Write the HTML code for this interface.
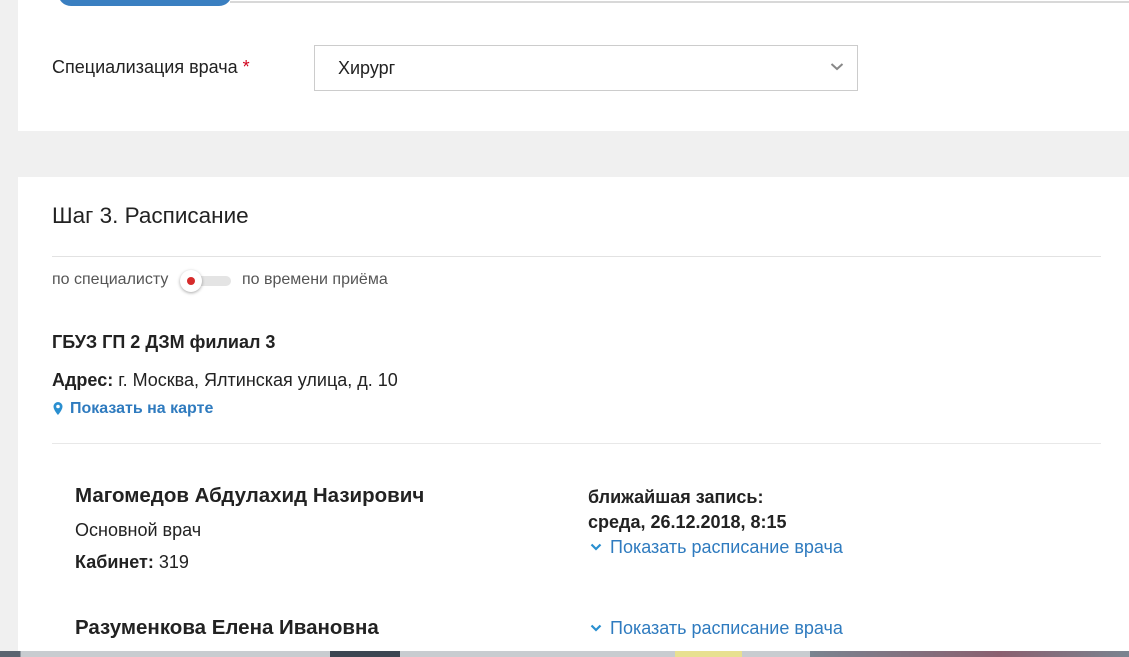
<!DOCTYPE html>
<html><head><meta charset="utf-8"><style>
*{margin:0;padding:0;box-sizing:border-box}
body{width:1129px;height:657px;overflow:hidden;background:#f0f0f0;font-family:"Liberation Sans",Arial,sans-serif;color:#222;position:relative}
.a{position:absolute;white-space:nowrap}
.w{background:#fff;left:18px;width:1111px}
</style></head><body>
<div class="a w" style="top:0;height:131px"></div>
<div class="a" style="left:230px;top:1px;width:899px;height:2px;background:#d8d8d8"></div>
<div class="a" style="left:58px;top:-20px;width:174px;height:26px;border-radius:13px;background:#3a7fc1"></div>
<div class="a" style="left:52px;top:57px;font-size:18px">Специализация врача <span style="color:#d0021b">*</span></div>
<div class="a" style="left:314px;top:45px;width:544px;height:46px;border:1px solid #ccc;background:#fff"></div>
<div class="a" style="left:338px;top:58px;font-size:18px">Хирург</div>
<svg class="a" style="left:830px;top:62px" width="14" height="10"><path d="M1.5 2l5.5 5 5.5-5" fill="none" stroke="#888" stroke-width="2"/></svg>

<div class="a w" style="top:177px;height:474px"></div>
<div class="a" style="left:52px;top:203px;font-size:22.5px;color:#222">Шаг 3. Расписание</div>
<div class="a" style="left:52px;top:256px;width:1049px;height:1px;background:#e2e2e2"></div>
<div class="a" style="left:52px;top:271px;font-size:16px;color:#555">по специалисту</div>
<div class="a" style="left:184px;top:276px;width:47px;height:10px;border-radius:5px;background:#e4e4e4"></div>
<div class="a" style="left:180px;top:270px;width:22px;height:22px;border-radius:50%;background:#fff;box-shadow:0 1px 3px rgba(0,0,0,.35)"></div>
<div class="a" style="left:187px;top:277px;width:8px;height:8px;border-radius:50%;background:#d62b2b"></div>
<div class="a" style="left:242px;top:271px;font-size:16px;color:#555">по времени приёма</div>
<div class="a" style="left:52px;top:332px;font-size:18px;font-weight:bold">ГБУЗ ГП 2 ДЗМ филиал 3</div>
<div class="a" style="left:52px;top:370px;font-size:18px"><b>Адрес:</b> г. Москва, Ялтинская улица, д. 10</div>
<svg class="a" style="left:52px;top:401px" width="12" height="15"><path d="M6 1a4.5 4.5 0 0 0-4.5 4.5C1.5 9 6 14 6 14s4.5-5 4.5-8.5A4.5 4.5 0 0 0 6 1z" fill="#2a8fd0"/><circle cx="6" cy="5.5" r="1.8" fill="#fff"/></svg>
<div class="a" style="left:70px;top:400px;font-size:16px;font-weight:bold;color:#2f7bbf">Показать на карте</div>
<div class="a" style="left:52px;top:443px;width:1049px;height:1px;background:#e8e8e8"></div>

<div class="a" style="left:75px;top:484px;font-size:20.5px;font-weight:bold">Магомедов Абдулахид Назирович</div>
<div class="a" style="left:75px;top:520px;font-size:18px">Основной врач</div>
<div class="a" style="left:75px;top:552px;font-size:18px"><b>Кабинет:</b> 319</div>
<div class="a" style="left:588px;top:487px;font-size:18px;font-weight:bold">ближайшая запись:</div>
<div class="a" style="left:588px;top:512px;font-size:18px;font-weight:bold">среда, 26.12.2018, 8:15</div>
<svg class="a" style="left:590px;top:543px" width="12" height="9"><path d="M1.5 1.5l4.5 4.5 4.5-4.5" fill="none" stroke="#2a8fd0" stroke-width="2.2"/></svg>
<div class="a" style="left:610px;top:537px;font-size:18px;color:#2f7bbf">Показать расписание врача</div>

<div class="a" style="left:75px;top:616px;font-size:20.5px;font-weight:bold">Разуменкова Елена Ивановна</div>
<svg class="a" style="left:590px;top:624px" width="12" height="9"><path d="M1.5 1.5l4.5 4.5 4.5-4.5" fill="none" stroke="#2a8fd0" stroke-width="2.2"/></svg>
<div class="a" style="left:610px;top:618px;font-size:18px;color:#2f7bbf">Показать расписание врача</div>

<div class="a" style="left:0;top:651px;width:1129px;height:6px;background:linear-gradient(90deg,#5a6470 0,#5a6470 20px,#c8ccd0 21px,#c8ccd0 330px,#3c4652 330px,#3c4652 400px,#c8ccd0 400px,#c8ccd0 675px,#e8e090 675px,#e8e090 742px,#c8ccd0 742px,#c8ccd0 810px,#7a8490 810px,#8a6070 1000px,#7a8490 1129px)"></div>
</body></html>
